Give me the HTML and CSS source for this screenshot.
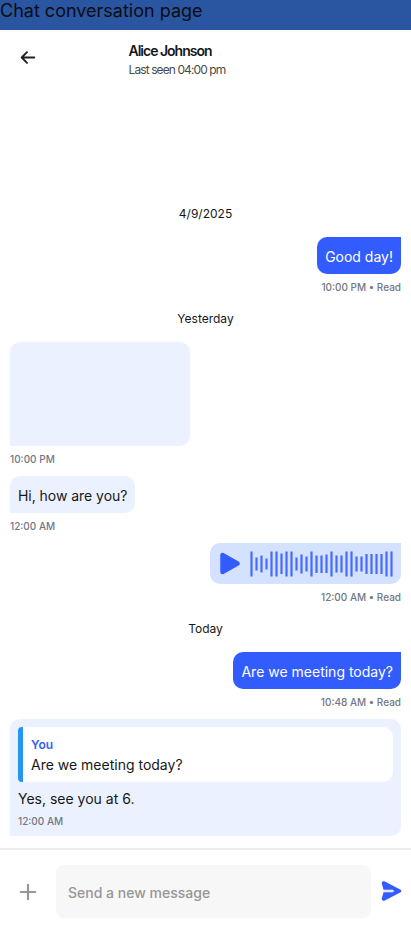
FILE: index.html
```html
<!DOCTYPE html>
<html lang="en">
<head>
<meta charset="utf-8">
<title>Chat conversation page</title>
<link rel="stylesheet" href="styles.css">
</head>
<body>
<div class="banner"><span>Chat conversation page</span></div>
<header class="header">
  <svg class="back" viewBox="0 0 16 14" fill="none" stroke="#202020" stroke-width="1.9" stroke-linecap="round" stroke-linejoin="round"><path d="M14.2 7.500H2M7 2.200 1.700 7.500 7 12.800"/></svg>
  <div class="person">
    <h1><span>Alice Johnson</span></h1>
    <p><span>Last seen 04:00 pm</span></p>
  </div>
</header>
<main class="chat">
  <div class="day first"><span>4/9/2025</span></div>
  <div class="bubble sent"><span>Good day!</span></div>
  <div class="meta right"><span>10:00 PM • Read</span></div>
  <div class="day"><span>Yesterday</span></div>
  <div class="bubble received picture"></div>
  <div class="meta"><span>10:00 PM</span></div>
  <div class="bubble received question"><span>Hi, how are you?</span></div>
  <div class="meta"><span>12:00 AM</span></div>
  <div class="bubble voice">
    <svg class="play" viewBox="0 0 20 24"><path d="M2.500 3v17L17.500 11.500z" fill="#335cff" stroke="#335cff" stroke-width="4.500" stroke-linejoin="round"/></svg>
    <svg class="wave" viewBox="0 0 143 26" fill="none" stroke="#456bff" stroke-width="2.2"><path d="M1.500 .5v25M6.500 6.500v13M11.500 4.500v17M16.500 7.500v11M21.500 .5v25M26.500 .5v25M31.500 2.500v20.500M36.500 .5v25M41.500 .5v25M46.500 6.500v13M51.500 3.500v19M56.500 5.500v15M61.500 .5v25M66.500 4.500v17.500M71.500 4.500v17.500M76.500 3.500v18.500M81.500 .5v25M86.500 4.500v17M91.500 4.500v17M96.500 .5v25M101.500 .5v25M106.500 5.500v15M111.500 5.500v15M116.500 3v20M121.500 3v20M126.500 3v20M131.500 3v20M136.500 .5v25M141.500 .5v25"/></svg>
  </div>
  <div class="meta right"><span>12:00 AM • Read</span></div>
  <div class="day"><span>Today</span></div>
  <div class="bubble sent"><span>Are we meeting today?</span></div>
  <div class="meta right"><span>10:48 AM • Read</span></div>
  <div class="bubble received reply">
    <div class="quote">
      <strong>You</strong>
      <p>Are we meeting today?</p>
    </div>
    <p class="answer"><span>Yes, see you at 6.</span></p>
    <div class="meta inner"><span>12:00 AM</span></div>
  </div>
</main>
<footer class="composer">
  <svg class="plus" viewBox="0 0 18 18" fill="none" stroke="#969696" stroke-width="2.2" stroke-linecap="round"><path d="M9 1.800v14.400M1.800 9h14.400"/></svg>
  <div class="field"><span>Send a new message</span></div>
  <svg class="send" viewBox="0 0 21 22"><path d="M3.300 1.300 19.200 9.500Q21.500 11 19.200 12.500L3.300 20.700Q.500 21.300.800 18.500L2.500 12.200H11.800Q13.200 11 11.800 9.800H2.500L.800 3.500Q.500.700 3.300 1.300Z" fill="#335cff"/><path d="M2.700 11h9.300" stroke="#dce4ff" stroke-width="1.700" stroke-linecap="round"/></svg>
</footer>
</body>
</html>
```
FILE: styles.css
```css
* { box-sizing: border-box; }
body, h1, p { margin: 0; }
body {
  display: flex;
  flex-direction: column;
  width: 411px;
  height: 926px;
  overflow: hidden;
  background: #fff;
  color: #171717;
  font-family: Inter, "Liberation Sans", sans-serif;
}
.banner {
  height: 30px;
  background: #2a55a0;
  color: #0a0d14;
  font-size: 18px;
  line-height: 22px;
}
.header { display: flex; height: 60px; padding: 12px 20px 0; }
.back { width: 16px; height: 14px; margin-top: 8px; }
.person { margin-left: 92.5px; }
.person h1 { font-size: 14px; font-weight: 600; line-height: 18px; letter-spacing: -1px; }
.person p { color: #4a4a4a; font-size: 12px; line-height: 19px; letter-spacing: -0.9px; }
.chat { display: flex; flex-direction: column; align-items: flex-start; height: 758px; padding: 0 10px; }
.day {
  align-self: center;
  margin: 16px 0;
  font-size: 12px;
  line-height: 15px;
}
.day.first { margin-top: 116px; }
.bubble { height: 37px; padding: 10px 8px; border-radius: 10px; font-size: 14px; line-height: 20px; }
.sent { align-self: flex-end; background: #335cff; color: #fff; border-top-right-radius: 0; }
.received { background: #ebf1ff; border-bottom-left-radius: 0; }
.picture { width: 180px; height: 104px; }
.question { letter-spacing: -0.04px; }
.meta {
  height: 30px;
  padding-top: 7px;
  color: #717784;
  font-size: 10px;
  font-weight: 550;
  line-height: 13px;
}
.meta.right { align-self: flex-end; height: 21px; }
.voice {
  display: flex;
  align-self: flex-end;
  align-items: center;
  width: 191px;
  height: 41px;
  background: #d5e2ff;
  border-top-right-radius: 0;
}
.play { width: 20px; height: 24px; margin-left: 2px; flex: none; }
.wave { width: 143px; height: 26px; margin-left: 10px; flex: none; }
.meta.right + .reply { margin-top: 9px; }
.reply { width: 391px; height: 117px; padding: 8px; }
.quote {
  height: 55px;
  padding: 9px 8px 0;
  background: #fff;
  border-left: 5px solid #2196f3;
  border-radius: 4px 10px 10px 4px;
}
.quote strong { display: block; color: #335cff; font-size: 12px; font-weight: 600; line-height: 18px; }
.quote p { line-height: 22px; }
.answer { margin-top: 7px; }
.meta.inner { height: 19px; padding-top: 6px; }
.composer { display: flex; align-items: flex-start; height: 78px; padding: 15px 8px 0 19px; border-top: 2px solid #ededed; }
.plus { width: 18px; height: 18px; margin-top: 18px; flex: none; }
.field {
  width: 315px;
  height: 53px;
  margin-left: 19px;
  flex: none;
  padding: 18px 12px;
  border-radius: 8px;
  background: #f7f7f7;
  color: #969696;
  font-size: 14px;
  font-weight: 500;
  line-height: 20px;
}
.send { width: 21px; height: 22px; margin: 15px 0 0 9.5px; flex: none; }
```
